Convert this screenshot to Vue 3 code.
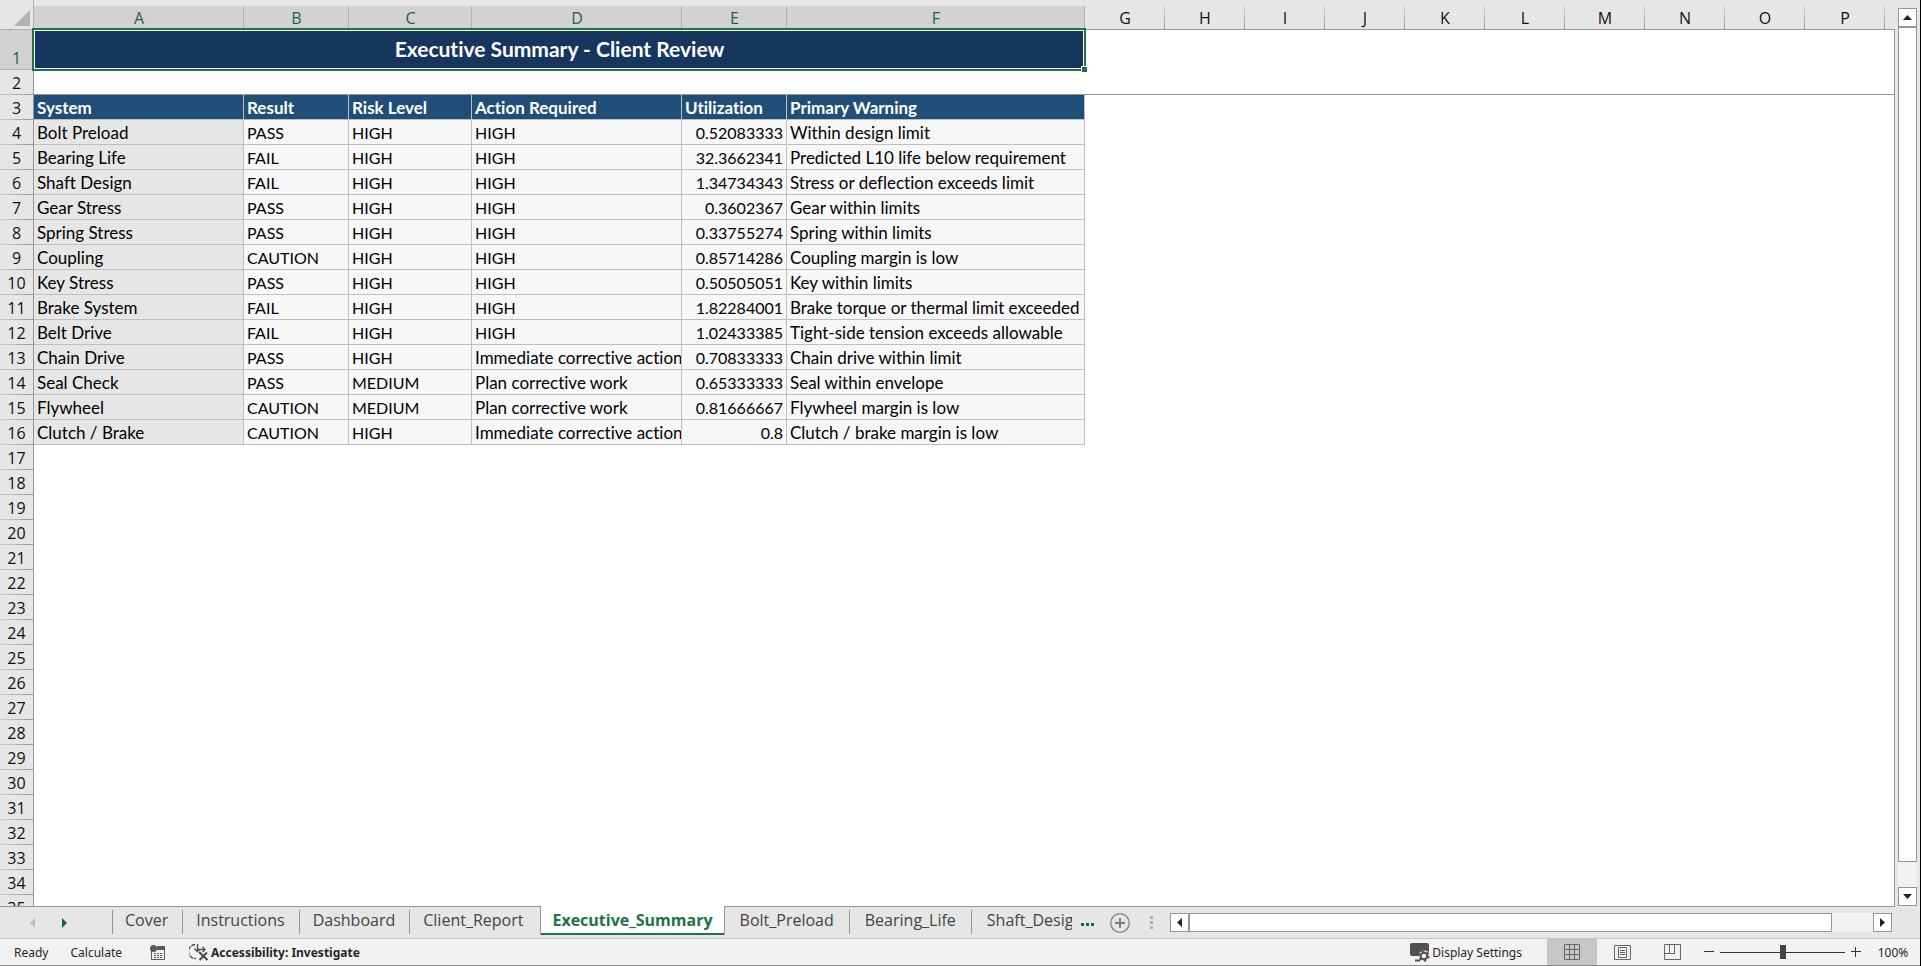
<script setup>
import { ref } from 'vue'

const widths = [210, 105, 123, 210, 105, 298, 80, 80, 80, 80, 80, 80, 80, 80, 80, 80]
const columns = widths.map((width, i) => ({
  letter: String.fromCharCode(65 + i),
  width,
  selected: i < 6,
}))
const headings = ['System', 'Result', 'Risk Level', 'Action Required', 'Utilization', 'Primary Warning']
const kinds = ['system', 'code', 'code', 'text', 'number', 'text']
const now = 'Immediate corrective action'
const plan = 'Plan corrective work'
const records = [
  ['Bolt Preload', 'PASS', 'HIGH', 'HIGH', '0.52083333', 'Within design limit'],
  ['Bearing Life', 'FAIL', 'HIGH', 'HIGH', '32.3662341', 'Predicted L10 life below requirement'],
  ['Shaft Design', 'FAIL', 'HIGH', 'HIGH', '1.34734343', 'Stress or deflection exceeds limit'],
  ['Gear Stress', 'PASS', 'HIGH', 'HIGH', '0.3602367', 'Gear within limits'],
  ['Spring Stress', 'PASS', 'HIGH', 'HIGH', '0.33755274', 'Spring within limits'],
  ['Coupling', 'CAUTION', 'HIGH', 'HIGH', '0.85714286', 'Coupling margin is low'],
  ['Key Stress', 'PASS', 'HIGH', 'HIGH', '0.50505051', 'Key within limits'],
  ['Brake System', 'FAIL', 'HIGH', 'HIGH', '1.82284001', 'Brake torque or thermal limit exceeded'],
  ['Belt Drive', 'FAIL', 'HIGH', 'HIGH', '1.02433385', 'Tight-side tension exceeds allowable'],
  ['Chain Drive', 'PASS', 'HIGH', now, '0.70833333', 'Chain drive within limit'],
  ['Seal Check', 'PASS', 'MEDIUM', plan, '0.65333333', 'Seal within envelope'],
  ['Flywheel', 'CAUTION', 'MEDIUM', plan, '0.81666667', 'Flywheel margin is low'],
  ['Clutch / Brake', 'CAUTION', 'HIGH', now, '0.8', 'Clutch / brake margin is low'],
]
const emptyRows = Array.from({ length: 19 }, (_, i) => i + 17)
const tabs = ['Cover', 'Instructions', 'Dashboard', 'Client_Report', 'Executive_Summary', 'Bolt_Preload', 'Bearing_Life', 'Shaft_Design']
const active = ref('Executive_Summary')
const zoom = ref(100)
</script>

<template>
  <div class="app">
    <div class="work">
      <main class="pane">
        <table class="grid">
          <colgroup>
            <col class="rowhead-col" />
            <col v-for="c in columns" :key="c.letter" :style="{ width: c.width + 'px' }" />
            <col />
          </colgroup>
          <thead>
            <tr>
              <td class="corner">
                <svg width="16" height="16" viewBox="0 0 16 16"><path d="M16 0V16H0Z" fill="#b2b2b2" /></svg>
              </td>
              <th v-for="c in columns" :key="c.letter" scope="col" class="colhead" :class="{ selected: c.selected }">{{ c.letter }}</th>
              <td class="colhead last"></td>
            </tr>
          </thead>
          <tbody>
            <tr class="title-row">
              <th scope="row" class="rowhead selected">1</th>
              <td colspan="6" class="title">Executive Summary - Client Review<span class="handle"></span></td>
              <td colspan="11"></td>
            </tr>
            <tr class="frozen">
              <th scope="row" class="rowhead">2</th>
              <td colspan="17"></td>
            </tr>
            <tr>
              <th scope="row" class="rowhead">3</th>
              <th v-for="h in headings" :key="h" scope="col" class="cell heading">{{ h }}</th>
              <td colspan="11"></td>
            </tr>
            <tr v-for="(r, i) in records" :key="r[0]">
              <th scope="row" class="rowhead">{{ i + 4 }}</th>
              <td v-for="(v, j) in r" :key="j" class="cell" :class="v === 'HIGH' ? 'code' : kinds[j]">{{ v }}</td>
              <td colspan="11"></td>
            </tr>
            <tr v-for="n in emptyRows" :key="n">
              <th scope="row" class="rowhead">{{ n }}</th>
              <td colspan="17"></td>
            </tr>
          </tbody>
        </table>
      </main>
      <div class="vscroll">
        <button type="button" class="arrow" aria-label="Scroll up">
          <svg width="9" height="5" viewBox="0 0 9 5"><path d="M0 5 4.500 0 9 5Z" fill="#222" /></svg>
        </button>
        <div class="vthumb"></div>
        <button type="button" class="arrow" aria-label="Scroll down">
          <svg width="9" height="5" viewBox="0 0 9 5"><path d="M0 0 4.500 5 9 0Z" fill="#222" /></svg>
        </button>
      </div>
    </div>

    <div class="tabbar">
      <div class="sheet-nav">
        <button type="button" aria-label="Previous sheet" disabled>
          <svg width="5" height="10" viewBox="0 0 5 10"><path d="M5 0V10L0 5Z" fill="#bdbdbd" /></svg>
        </button>
        <button type="button" aria-label="Next sheet">
          <svg width="5" height="10" viewBox="0 0 5 10"><path d="M0 0V10L5 5Z" fill="#0e6b37" /></svg>
        </button>
      </div>
      <nav class="tabs">
        <button v-for="t in tabs" :key="t" type="button" class="tab" :class="{ active: t === active }" @click="active = t">{{ t }}</button>
      </nav>
      <button type="button" class="more" aria-label="More sheets">
        <svg width="13" height="6" viewBox="0 0 13 6"><path d="M0 3h3v3H0zM5 3h3v3H5zM10 3h3v3h-3z" fill="#0e6b37" /></svg>
      </button>
      <button type="button" class="add" aria-label="New sheet">
        <svg width="20" height="20" viewBox="0 0 20 20" fill="none" stroke="#808080"><circle cx="10" cy="10" r="9.300" stroke-width="1.300" /><path d="M10 5V15M5 10H15" stroke-width="2" /></svg>
      </button>
      <svg class="grip" width="3" height="13" viewBox="0 0 3 13"><path d="M0 0h3v3H0zM0 5h3v3H0zM0 10h3v3H0z" fill="#b0b0b0" /></svg>
      <div class="hscroll">
        <button type="button" class="arrow" aria-label="Scroll left">
          <svg width="5" height="9" viewBox="0 0 5 9"><path d="M5 0V9L0 4.500Z" fill="#222" /></svg>
        </button>
        <div class="hthumb"></div>
        <button type="button" class="arrow" aria-label="Scroll right">
          <svg width="5" height="9" viewBox="0 0 5 9"><path d="M0 0V9L5 4.500Z" fill="#222" /></svg>
        </button>
      </div>
    </div>

    <footer class="status">
      <span class="ready">Ready</span>
      <span class="calc">Calculate</span>
      <button type="button" class="macro" aria-label="Record macro">
        <svg width="16" height="15" viewBox="0 0 16 15">
          <path d="M1.500 3V14.500H14.500V3" fill="none" stroke="#5a5a5a" />
          <path d="M7 1H15V5H7Z" fill="#5a5a5a" />
          <circle cx="3.500" cy="3.500" r="3.500" fill="#5a5a5a" />
          <path d="M4 8.500H13M4 10.500H13M4 12.500H13" stroke="#5a5a5a" stroke-dasharray="2 1" />
        </svg>
      </button>
      <button type="button" class="access">
        <svg width="20" height="18" viewBox="0 0 20 18" fill="none" stroke="#4a4a4a">
          <path d="M6 1.500A7 7 0 0 0 7 15.500" stroke-width="1.300" stroke-dasharray="4 1" />
          <path d="M8.500 1V6.500H16M13.500 4 16 6.500 13.500 9M5.500 5.500 8 8.500 11 6.500" stroke-width="1.300" />
          <path d="M10 9 18.500 17M18 9.500 10.500 17" stroke-width="2" />
        </svg>
        <span>Accessibility: Investigate</span>
      </button>
      <button type="button" class="display">
        <svg width="20" height="19" viewBox="0 0 20 19">
          <path d="M2 0H17Q19 0 19 2V9L14 7 9 10V13H2Q0 13 0 11V2Q0 0 2 0Z" fill="#505050" />
          <path d="M5 17.500H10" stroke="#505050" stroke-width="2" />
          <circle cx="14" cy="13" r="3.300" fill="none" stroke="#505050" stroke-width="2" />
          <circle cx="14" cy="13" r="4.700" fill="none" stroke="#505050" stroke-width="1.800" stroke-dasharray="2.460 2.460" />
        </svg>
        <span>Display Settings</span>
      </button>
      <button type="button" class="view on" aria-label="Normal view">
        <svg width="16" height="16" viewBox="0 0 16 16" fill="none" stroke="#666"><path d="M.5.5H15.500V15.500H.5ZM5.500 0V16M10.500 0V16M0 5.500H16M0 10.500H16" /></svg>
      </button>
      <button type="button" class="view" aria-label="Page layout">
        <svg width="17" height="15" viewBox="0 0 17 15" fill="none" stroke="#666"><path d="M.5.5H16.500V14.500H.5ZM4.500 2.500H12.500V12.500H4.500ZM6 5.500H11M6 7.500H11M6 9.500H11" /></svg>
      </button>
      <button type="button" class="view" aria-label="Page break preview">
        <svg width="17" height="16" viewBox="0 0 17 16" fill="none" stroke="#666"><path d="M.5.5H16.500V15.500H.5ZM5.500 0V9M10.500 0V9.500M0 9.500H11" /></svg>
      </button>
      <button type="button" class="step out" aria-label="Zoom out">
        <svg width="10" height="10" viewBox="0 0 10 10"><path d="M0 4.500H10" stroke="#333" /></svg>
      </button>
      <input v-model="zoom" class="slider" type="range" min="0" max="200" aria-label="Zoom" />
      <button type="button" class="step" aria-label="Zoom in">
        <svg width="10" height="10" viewBox="0 0 10 10"><path d="M0 4.500H10M4.500 0V10" stroke="#333" /></svg>
      </button>
      <button type="button" class="percent">{{ zoom }}%</button>
    </footer>
  </div>
</template>

<style>
body {
  margin: 0;
  background: #e6e6e6;
}
</style>

<style scoped>
.app {
  display: flex;
  flex-direction: column;
  height: 100vh;
  box-sizing: border-box;
  border-right: 1px solid #000;
  background: #e6e6e6;
  overflow: hidden;
  font-family: "Open Sans", "Noto Sans", sans-serif;
  color: #262626;
}
button {
  display: flex;
  align-items: center;
  justify-content: center;
  padding: 0;
  border: 0;
  background: none;
  font: inherit;
  color: inherit;
  white-space: nowrap;
}
svg {
  display: block;
  flex: none;
}
.work {
  display: flex;
  flex: 1;
  min-height: 0;
}
.pane {
  flex: 1;
  min-width: 0;
  overflow: hidden;
  border-bottom: 1px solid #969696;
}
.grid {
  width: 100%;
  table-layout: fixed;
  border-collapse: separate;
  border-spacing: 0;
  background: linear-gradient(#969696, #969696) right / 1px 100% no-repeat, #fff;
}
.grid td,
.grid th {
  box-sizing: border-box;
  height: 25px;
  padding: 0;
  overflow: hidden;
  white-space: nowrap;
}
.rowhead-col {
  width: 34px;
}
.grid .corner {
  height: 30px;
  padding: 7px 3px 0 14px;
  background: #e6e6e6;
  border-right: 1px solid #b0b0b0;
  border-bottom: 1px solid #b0b0b0;
}
.grid .colhead {
  padding-top: 8px;
  border-bottom: 1px solid #969696;
  background: linear-gradient(#d0d0d0, #969696) right bottom / 1px 23px no-repeat, #e6e6e6;
  font-size: 16px;
  line-height: 21px;
  font-weight: 400;
  color: #111;
}
.grid .colhead.selected {
  background: linear-gradient(#b0b0b0, #b0b0b0) right bottom / 1px 23px no-repeat,
    linear-gradient(#d2d2d2, #d2d2d2) bottom / 100% 23px no-repeat, #e6e6e6;
  color: #1e6343;
}
.grid .colhead.last {
  background: #e6e6e6;
}
.grid .rowhead {
  border-right: 1px solid #969696;
  background: linear-gradient(90deg, #d0d0d0, #969696) bottom / 100% 1px no-repeat, #e6e6e6;
  font-size: 16px;
  line-height: 24px;
  font-weight: 400;
  color: #111;
}
.grid .rowhead.selected {
  padding-top: 16px;
  background: linear-gradient(#b0b0b0, #b0b0b0) bottom / 100% 1px no-repeat, #d2d2d2;
  color: #1e6343;
}
.grid .title-row > * {
  height: 40px;
}
.grid .title {
  position: relative;
  padding-bottom: 2px;
  overflow: visible;
  background: #17365d;
  font: 700 21px/34px Lato, sans-serif;
  font-variant-ligatures: none;
  text-align: center;
  color: #fff;
}
.title::after {
  content: "";
  position: absolute;
  inset: -2px -1px -1px -2px;
  border: 2px solid #217346;
  box-shadow: inset 0 0 0 1px #fff;
}
.handle {
  position: absolute;
  z-index: 1;
  right: -2px;
  bottom: -2px;
  width: 5px;
  height: 5px;
  border-top: 1px solid #fff;
  border-left: 1px solid #fff;
  background: #217346;
}
.grid .frozen td {
  border-bottom: 1px solid #969696;
}
.grid .cell {
  padding: 2px 3px 0;
  border-right: 1px solid #bfbfbf;
  border-bottom: 1px solid #bfbfbf;
  background: #f7f7f7;
  font: 400 17px/22px Lato, sans-serif;
  font-variant-ligatures: none;
  text-align: left;
  color: #000;
}
.grid .cell.heading {
  background: #1f4e78;
  font-weight: 700;
  color: #fff;
}
.grid .cell.system {
  background: #e6e6e6;
}
.grid .cell.code,
.grid .cell.number {
  font-size: 16px;
}
.grid .cell.number {
  text-align: right;
}
.arrow {
  box-sizing: border-box;
  width: 19px;
  height: 19px;
  flex: none;
  border: 1px solid #969696;
  background: #fff;
}
.vscroll {
  display: flex;
  flex-direction: column;
  width: 19px;
  margin: 8px 3px 1px 3px;
  background: #f2f2f2;
}
.vthumb {
  box-sizing: border-box;
  height: 93%;
  margin-bottom: auto;
  border: 1px solid #969696;
  background: #fff;
}
.tabbar {
  display: flex;
  flex: none;
  height: 31px;
  border-bottom: 1px solid #c6c6c6;
}
.sheet-nav {
  display: flex;
  gap: 27px;
  width: 82px;
  padding-left: 30px;
}
.tabs {
  display: flex;
  width: 960px;
  margin-top: -1px;
  overflow: hidden;
  background: linear-gradient(#969696, #969696) 0 4px / 1px 24px no-repeat;
}
.tab {
  height: 28px;
  margin-top: 1px;
  padding: 0 15px 3px 13px;
  flex: none;
  background: linear-gradient(#969696, #969696) right 3px / 1px 24px no-repeat;
  font-size: 16px;
  color: #444;
}
.tab:has(+ .active) {
  padding-right: 17px;
  background: none;
}
.tab.active {
  height: 29px;
  margin-top: 0;
  padding: 0 11px 2px;
  border: 1px solid #969696;
  border-width: 0 1px;
  box-shadow: inset 0 -2px #217346;
  background: #fff;
  font-weight: 700;
  color: #217346;
}
.tab.active ~ .tab {
  padding: 0 16px 3px 15px;
}
.more {
  margin: 0 16px 0 9px;
}
.grip {
  margin: 9px 17px 0 20px;
}
.hscroll {
  display: flex;
  flex: 1;
  height: 19px;
  margin: 6px 28px 0 0;
  background: #f2f2f2;
}
.hthumb {
  box-sizing: border-box;
  width: 89%;
  margin-right: auto;
  border: 1px solid #969696;
  background: #fff;
}
.status {
  display: flex;
  flex: none;
  align-items: center;
  height: 26px;
  border-bottom: 1px solid #8a8a8a;
  background: #f2f2f2;
  font-family: "Noto Sans", sans-serif;
  font-size: 12px;
}
.ready {
  margin-left: 14px;
}
.calc {
  margin-left: 22px;
}
.macro {
  margin-left: 28px;
}
.access {
  gap: 2px;
  margin-left: 23px;
  font-weight: 700;
}
.display {
  gap: 2px;
  margin: 0 25px 0 auto;
}
.view {
  width: 50px;
  height: 26px;
}
.view.on {
  background: #c6c6c6;
}
.slider {
  width: 125px;
  height: 16px;
  margin: 0 6px;
  appearance: none;
  background: linear-gradient(#333, #333) center / 100% 1px no-repeat;
}
.slider::-webkit-slider-thumb {
  appearance: none;
  width: 6px;
  height: 14px;
  background: #444;
}
.step.out {
  margin-left: 7px;
}
.percent {
  width: 59px;
  padding-left: 5px;
}
</style>
